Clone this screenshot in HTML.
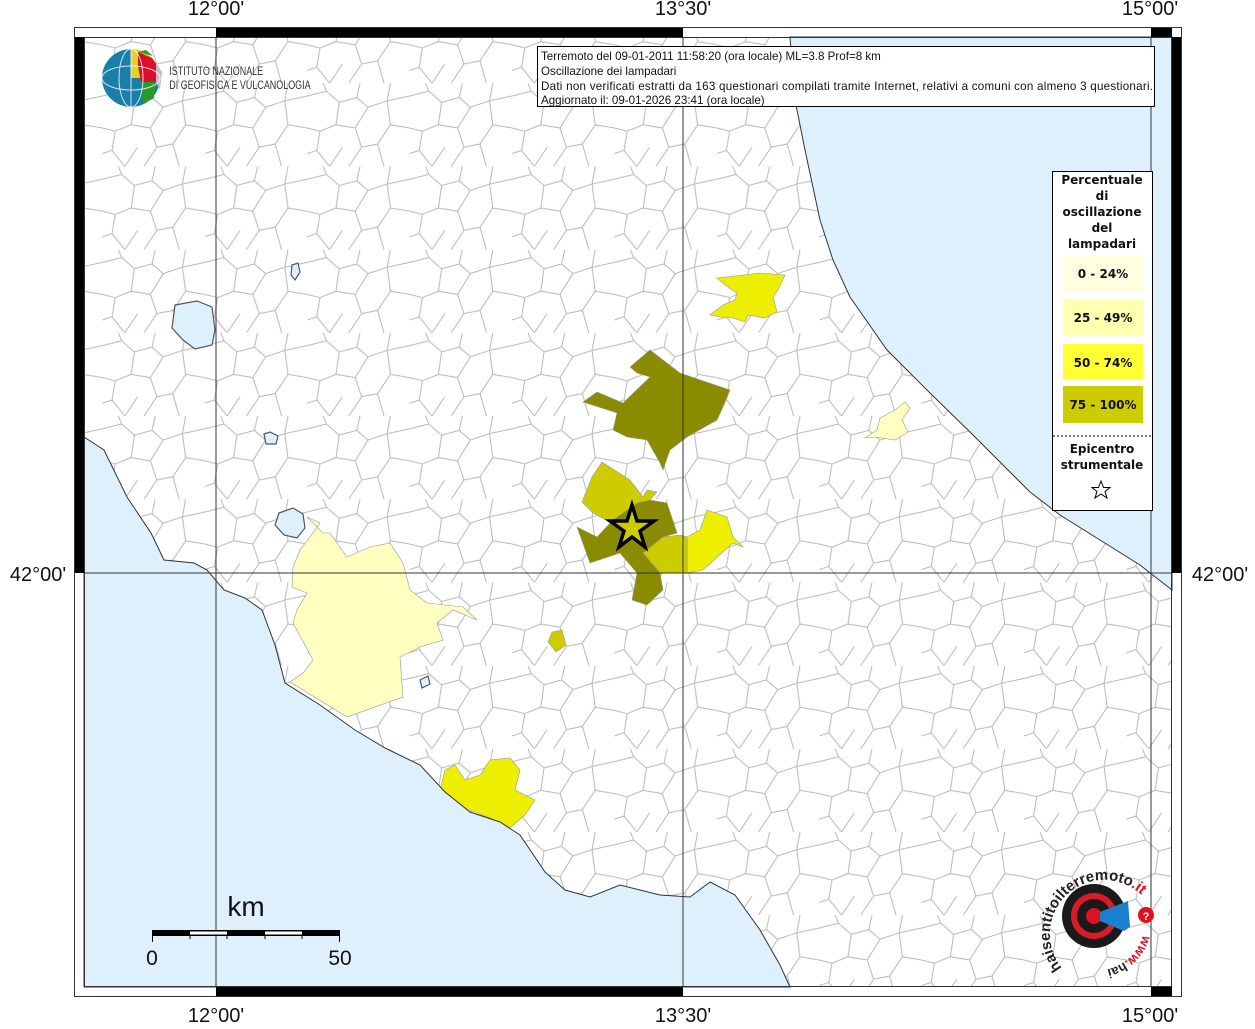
<!DOCTYPE html>
<html><head><meta charset="utf-8"><style>
html,body{margin:0;padding:0;background:#fff;}
body{width:1255px;height:1024px;overflow:hidden;font-family:"Liberation Sans",sans-serif;}
</style></head><body>
<svg width="1255" height="1024" viewBox="0 0 1255 1024" xmlns="http://www.w3.org/2000/svg" font-family="Liberation Sans, sans-serif">
<defs>
<pattern id="mun" width="64" height="52" patternUnits="userSpaceOnUse" patternTransform="scale(1.6)">
<path d="M0,8 L12,5 20,12 31,9 38,15 50,11 64,8 M12,5 L10,0 M31,9 L33,0 M50,11 L52,0 M20,12 L18,26 8,30 0,28 M18,26 L30,28 38,15 M30,28 L34,40 44,38 52,26 50,11 M52,26 L64,28 M34,40 L26,52 M44,38 L48,52 M8,30 L6,42 14,52 M6,42 L0,44 M22,40 L14,52" fill="none" stroke="#b4b4b4" stroke-width="0.6"/>
</pattern>
</defs>
<rect x="84" y="37" width="1088" height="950" fill="#fff"/>
<rect x="84" y="37" width="1088" height="950" fill="url(#mun)"/>
<g stroke="#999" stroke-width="0.6">
<path d="M307,517 L320,523 313,533 300,550 293,567 292,587 307,593 297,610 293,623 313,660 303,673 290,682 347,717 403,697 400,657 420,647 443,640 437,623 453,610 477,620 463,607 427,603 410,590 403,563 390,543 370,547 347,557 330,533 323,533 Z" fill="#ffffc0"/>
<path d="M880,418 L895,410 905,402 910,408 902,420 908,432 895,440 875,437 865,438 877,430 Z" fill="#ffffc0"/>
<path d="M717,278 L760,273 785,275 778,290 773,297 777,312 765,318 748,315 745,322 733,318 720,317 710,315 723,305 735,300 737,293 725,285 Z" fill="#eeee00"/>
<path d="M455,765 L465,780 480,775 490,760 510,758 520,770 515,790 535,800 525,815 510,828 490,818 470,810 455,810 440,790 445,770 Z" fill="#eeee00"/>
<path d="M687,537 L700,530 707,510 727,517 733,537 743,547 733,543 703,570 687,573 Z" fill="#eeee00"/>
<path d="M552,632 L562,630 566,645 556,652 548,642 Z" fill="#cccc00"/>
<path d="M602,462 L630,480 643,497 647,490 657,492 650,500 637,503 627,513 610,522 593,513 582,502 592,477 Z" fill="#cccc00"/>
<path d="M663,537 L680,535 687,537 687,573 660,573 643,553 Z" fill="#cccc00"/>
<path d="M650,500 L667,503 677,533 663,537 643,553 660,573 663,590 647,605 632,600 637,573 620,553 590,563 577,527 597,537 613,520 637,503 Z" fill="#8b8b00"/>
<path d="M650,350 L680,373 730,390 723,407 717,420 687,437 670,450 663,470 660,463 647,440 627,437 613,430 617,413 583,402 597,392 623,403 650,377 637,373 630,367 Z" fill="#8b8b00"/>
</g>
<g fill="#dff0fd" stroke="#555" stroke-width="1.2">
<path d="M175,305 L197,301 212,307 215,330 212,345 195,349 183,340 172,328 Z"/>
<path d="M264,434 L270,432 278,436 276,444 266,444 Z"/>
<path d="M292,265 L298,263 300,272 295,280 291,275 Z"/>
<path d="M279,513 L293,508 303,514 305,528 297,538 284,535 275,525 Z"/>
<path d="M420,680 L428,676 430,684 422,688 Z"/>
</g>
<g fill="#dff0fd" stroke="#333" stroke-width="1">
<path d="M84,437 L104,450 127,497 151,533 164,560 194,563 207,570 224,590 245,598 262,610 275,645 285,683 320,705 355,730 385,748 420,765 445,792 470,812 500,822 520,835 545,872 565,890 590,897 620,885 660,895 690,897 710,882 735,895 760,930 780,965 790,987 L84,987 Z"/>
<path d="M790,37 L795,100 805,150 820,220 833,260 850,297 887,350 930,393 970,432 1000,462 1030,492 1060,515 1100,540 1140,565 1172,590 L1172,37 Z"/>
</g>
<g stroke="#333" stroke-width="1">
<line x1="216" y1="37" x2="216" y2="987"/>
<line x1="683" y1="37" x2="683" y2="987"/>
<line x1="1151" y1="37" x2="1151" y2="987"/>
<line x1="84" y1="573" x2="1172" y2="573"/>
</g>
<polygon points="632,505 637,521 654,521 640,531 645,547 632,537 619,547 624,531 610,521 627,521" fill="#cccc00" stroke="#000" stroke-width="3.5"/>
<rect x="74.5" y="27.5" width="1107" height="969" fill="none" stroke="#333" stroke-width="1"/>
<rect x="84.5" y="37.5" width="1087" height="949" fill="none" stroke="#333" stroke-width="1"/>
<rect x="216" y="28" width="467" height="9" fill="#000"/>
<rect x="1151" y="28" width="21" height="9" fill="#000"/>
<rect x="216" y="987" width="467" height="9" fill="#000"/>
<rect x="1151" y="987" width="21" height="9" fill="#000"/>
<rect x="75" y="37" width="9" height="536" fill="#000"/>
<rect x="1172" y="37" width="9" height="536" fill="#000"/>
<g font-size="20" fill="#111" text-anchor="middle">
<text x="216" y="15">12°00'</text>
<text x="683" y="15">13°30'</text>
<text x="1150" y="15">15°00'</text>
<text x="216" y="1022">12°00'</text>
<text x="683" y="1022">13°30'</text>
<text x="1150" y="1022">15°00'</text>
<text x="38" y="581">42°00'</text>
<text x="1220" y="581">42°00'</text>
</g>
<rect x="537.5" y="46.5" width="617" height="60" fill="#fff" stroke="#000"/>
<g font-size="11.6" fill="#111">
<text x="541" y="60">Terremoto del 09-01-2011 11:58:20 (ora locale) ML=3.8 Prof=8 km</text>
<text x="541" y="75">Oscillazione dei lampadari</text>
<text x="541" y="90" textLength="612">Dati non verificati estratti da 163 questionari compilati tramite Internet, relativi a comuni con almeno 3 questionari.</text>
<text x="541" y="104">Aggiornato il: 09-01-2026 23:41 (ora locale)</text>
</g>
<rect x="1052.5" y="171.5" width="100" height="339" fill="#fff" stroke="#000"/>
<g font-family="DejaVu Sans, sans-serif" font-size="12" font-weight="bold" text-anchor="middle" fill="#111">
<text x="1102" y="184">Percentuale</text>
<text x="1102" y="200">di</text>
<text x="1102" y="216">oscillazione</text>
<text x="1102" y="232">del</text>
<text x="1102" y="248">lampadari</text>
<rect x="1063" y="255" width="80" height="36" fill="#ffffe0"/>
<rect x="1063" y="299" width="80" height="36" fill="#ffffb0"/>
<rect x="1063" y="344" width="80" height="36" fill="#ffff33"/>
<rect x="1063" y="386" width="80" height="37" fill="#cccc00"/>
<text x="1103" y="278">0 - 24%</text>
<text x="1103" y="322">25 - 49%</text>
<text x="1103" y="367">50 - 74%</text>
<text x="1103" y="409">75 - 100%</text>
<line x1="1053" y1="436" x2="1152" y2="436" stroke="#000" stroke-dasharray="2,2"/>
<text x="1102" y="453">Epicentro</text>
<text x="1102" y="469">strumentale</text>
</g>
<polygon points="1101,481 1103.5,487.5 1110,487.5 1105,491.5 1107,498 1101,494 1095,498 1097,491.5 1092,487.5 1098.5,487.5" fill="none" stroke="#000" stroke-width="1"/>
<circle cx="131" cy="78" r="29" fill="#1a7fa8"/>
<path d="M131,49 A29,29 0 0 1 160,78 L131,78 Z" fill="#e8d020"/>
<path d="M138,52 L152,58 160,70 156,82 141,82 138,66 Z" fill="#d8102a"/>
<path d="M141,82 L156,82 154,98 143,104 Z" fill="#2a9a2a"/>
<path d="M138,52 L146,50 153,56 Z" fill="#2a9a2a"/>
<path d="M156,62 L162,72 160,90 156,82 Z" fill="#c8b8d0"/>
<g fill="none" stroke="#fff" stroke-width="1" opacity="0.8">
<ellipse cx="131" cy="78" rx="12" ry="29"/><ellipse cx="131" cy="78" rx="29" ry="12"/><line x1="131" y1="49" x2="131" y2="107"/>
</g>
<g font-size="11.5" fill="#333" transform="scale(0.78,1)">
<text x="217" y="75">ISTITUTO NAZIONALE</text>
<text x="217" y="89">DI GEOFISICA E VULCANOLOGIA</text>
</g>
<rect x="152" y="930" width="188" height="6" fill="#000"/>
<rect x="190" y="931.5" width="37" height="3" fill="#fff"/>
<rect x="265" y="931.5" width="37" height="3" fill="#fff"/>
<g stroke="#000" stroke-width="1"><line x1="152.5" y1="930" x2="152.5" y2="942"/><line x1="339.5" y1="930" x2="339.5" y2="942"/><line x1="190" y1="936" x2="190" y2="939"/><line x1="227" y1="936" x2="227" y2="939"/><line x1="265" y1="936" x2="265" y2="939"/><line x1="302" y1="936" x2="302" y2="939"/></g>
<text x="246" y="916" font-size="28" text-anchor="middle" fill="#111">km</text>
<text x="152" y="965" font-size="21" text-anchor="middle" fill="#111">0</text>
<text x="340" y="965" font-size="21" text-anchor="middle" fill="#111">50</text>
<defs><path id="arc" d="M1062,968 A50,50 0 1 1 1146,900"/>
<path id="arc2" d="M1143,935 A48,48 0 0 1 1090,970"/></defs>
<text font-size="15" font-weight="bold" fill="#222"><textPath href="#arc">haisentitoilterremoto<tspan fill="#e01020">.it</tspan></textPath></text>
<text font-size="13" font-weight="bold" fill="#e01020"><textPath href="#arc2">www.<tspan fill="#222">hai</tspan></textPath></text>
<circle cx="1094" cy="916" r="32" fill="#1a1a1a"/>
<circle cx="1094" cy="916" r="20" fill="none" stroke="#d81a2a" stroke-width="6"/>
<circle cx="1094" cy="916" r="8" fill="#e01020"/>
<path d="M1100,912 L1128,901 1130,927 1124,931 1100,921 Z" fill="#1a80d0"/>
<circle cx="1146" cy="915" r="8" fill="#e01020"/>
<text x="1146" y="920" font-size="11" font-weight="bold" fill="#fff" text-anchor="middle">?</text>
</svg>
</body></html>
